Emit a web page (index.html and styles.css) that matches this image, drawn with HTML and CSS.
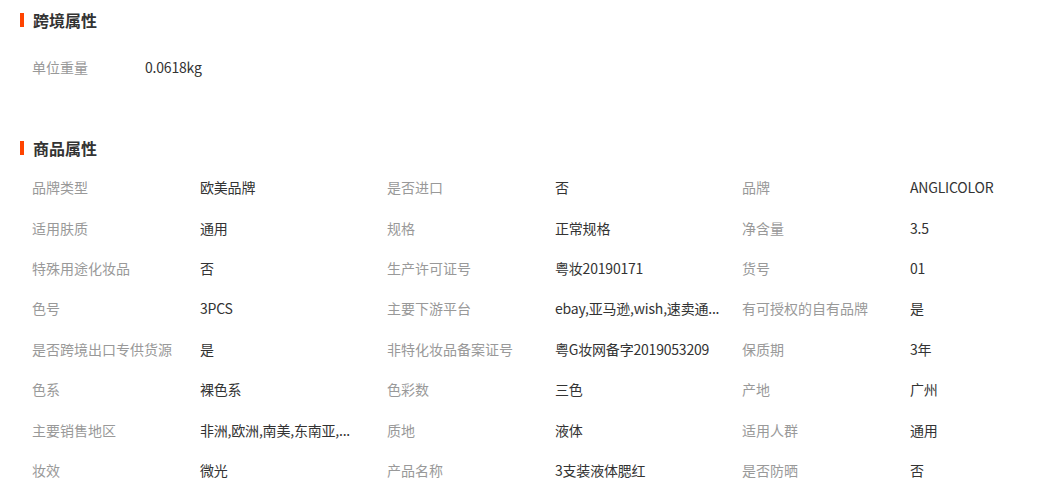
FILE: index.html
```html
<!DOCTYPE html>
<html lang="zh-CN">
  <head>
    <meta charset="UTF-8" />
    <meta name="viewport" content="width=device-width, initial-scale=1.0" />
    <title>商品属性</title>
    <link rel="stylesheet" href="styles.css">
  </head>
  <body>
    <!-- 跨境属性 -->
    <div class="section section-cross">
      <h2 class="section-title">跨境属性</h2>
      <div class="attr-list">
        <div class="attr-item">
          <span class="attr-label attr-label-short">单位重量</span>
          <span class="attr-value">0.0618kg</span>
        </div>
      </div>
    </div>

    <!-- 商品属性 -->
    <div class="section">
      <h2 class="section-title">商品属性</h2>
      <div class="attr-grid">
        <div class="attr-item"><span class="attr-label">品牌类型</span><span class="attr-value">欧美品牌</span></div>
        <div class="attr-item"><span class="attr-label">是否进口</span><span class="attr-value">否</span></div>
        <div class="attr-item"><span class="attr-label">品牌</span><span class="attr-value">ANGLICOLOR</span></div>

        <div class="attr-item"><span class="attr-label">适用肤质</span><span class="attr-value">通用</span></div>
        <div class="attr-item"><span class="attr-label">规格</span><span class="attr-value">正常规格</span></div>
        <div class="attr-item"><span class="attr-label">净含量</span><span class="attr-value">3.5</span></div>

        <div class="attr-item"><span class="attr-label">特殊用途化妆品</span><span class="attr-value">否</span></div>
        <div class="attr-item"><span class="attr-label">生产许可证号</span><span class="attr-value">粤妆20190171</span></div>
        <div class="attr-item"><span class="attr-label">货号</span><span class="attr-value">01</span></div>

        <div class="attr-item"><span class="attr-label">色号</span><span class="attr-value">3PCS</span></div>
        <div class="attr-item"><span class="attr-label">主要下游平台</span><span class="attr-value" title="ebay,亚马逊,wish,速卖通">ebay,亚马逊,wish,速卖通...</span></div>
        <div class="attr-item"><span class="attr-label">有可授权的自有品牌</span><span class="attr-value">是</span></div>

        <div class="attr-item"><span class="attr-label">是否跨境出口专供货源</span><span class="attr-value">是</span></div>
        <div class="attr-item"><span class="attr-label">非特化妆品备案证号</span><span class="attr-value">粤G妆网备字2019053209</span></div>
        <div class="attr-item"><span class="attr-label">保质期</span><span class="attr-value">3年</span></div>

        <div class="attr-item"><span class="attr-label">色系</span><span class="attr-value">裸色系</span></div>
        <div class="attr-item"><span class="attr-label">色彩数</span><span class="attr-value">三色</span></div>
        <div class="attr-item"><span class="attr-label">产地</span><span class="attr-value">广州</span></div>

        <div class="attr-item"><span class="attr-label">主要销售地区</span><span class="attr-value" title="非洲,欧洲,南美,东南亚">非洲,欧洲,南美,东南亚,...</span></div>
        <div class="attr-item"><span class="attr-label">质地</span><span class="attr-value">液体</span></div>
        <div class="attr-item"><span class="attr-label">适用人群</span><span class="attr-value">通用</span></div>

        <div class="attr-item"><span class="attr-label">妆效</span><span class="attr-value">微光</span></div>
        <div class="attr-item"><span class="attr-label">产品名称</span><span class="attr-value">3支装液体腮红</span></div>
        <div class="attr-item"><span class="attr-label">是否防晒</span><span class="attr-value">否</span></div>
      </div>
    </div>
  </body>
</html>
```

FILE: styles.css
```css
body {
  margin: 0;
  padding: 8px 0 0 0;
  font-family: "Microsoft YaHei", "Noto Sans CJK SC", "Noto Sans", sans-serif;
  font-size: 14px;
  color: #333;
  background-color: #fff;
}

.section {
  padding-left: 20px;
}

.section-cross {
  padding-bottom: 49px;
}

.section-title {
  display: flex;
  align-items: center;
  height: 24px;
  margin: 0;
  font-size: 16px;
  font-weight: bold;
  line-height: 24px;
  color: #333;
}

.section-title::before {
  content: "";
  width: 4px;
  height: 14px;
  margin-right: 9px;
  background-color: #ff4400;
}

.attr-list {
  margin-top: 15px;
  padding-left: 12px;
}

.attr-grid {
  display: grid;
  grid-template-columns: 355px 355px 1fr;
  margin-top: 6.6px;
  padding-left: 12px;
}

.attr-item {
  display: flex;
  align-items: center;
  height: 40.4px;
  white-space: nowrap;
}

.attr-label {
  flex: 0 0 168px;
  color: #999;
}

.attr-label-short {
  flex-basis: 113px;
}

.attr-value {
  letter-spacing: -0.2px;
  color: #333;
}
```
